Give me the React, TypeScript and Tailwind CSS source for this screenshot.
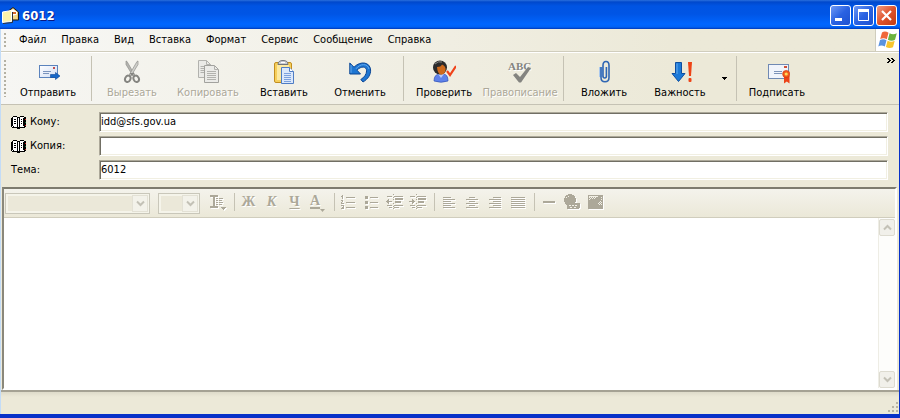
import type { ReactNode } from "react";
import { clsx } from "clsx";

const MENU = ["Файл", "Правка", "Вид", "Вставка", "Формат", "Сервис", "Сообщение", "Справка"];

function TitleIcon() {
  return (
    <svg width="17" height="17" viewBox="0 0 17 17">
      <path d="M5 5 L11 0.5 L16.5 5 V13 H5Z" fill="#e8c66c" stroke="#1a1a1a" />
      <path d="M7 5 L11 2 L15 5 V10 H7Z" fill="#fff" />
      <path d="M11 5 H14 V7 H11Z" fill="#d96a2b" />
      <path d="M10 9 L15 7.5 V12 H10Z" fill="#f3d98a" />
      <path d="M0.5 5 L9.5 3.5 V14.5 L0.5 15.5Z" fill="#fbf3ab" stroke="#fff" />
      <path d="M1 16.5 L10.5 15.5 V5" fill="none" stroke="#333" />
    </svg>
  );
}

function WindowsFlag() {
  return (
    <svg width="20" height="18" viewBox="0 0 20 18">
      <path d="M4 1.5 Q7 -0.5 10.5 1.8 L8.8 8.2 Q5.5 6.2 2.2 8Z" fill="#f0683a" />
      <path d="M11.6 2.2 Q15 4.2 18.8 2.2 L17 8.8 Q13.5 10.6 9.9 8.7Z" fill="#6cb33f" />
      <path d="M2 9 Q5.3 7.3 8.5 9.2 L6.8 15.6 Q3.5 13.6 0.3 15.4Z" fill="#5a93e0" />
      <path d="M9.6 9.7 Q13 11.6 16.7 9.7 L15 16.3 Q11.5 18 7.9 16.1Z" fill="#f7c52e" />
    </svg>
  );
}

function SendIcon() {
  return (
    <svg width="26" height="24" viewBox="0 0 26 24">
      <defs>
        <linearGradient id="env" x1="0" y1="0" x2="1" y2="1">
          <stop offset="0" stopColor="#fff" />
          <stop offset="1" stopColor="#cfdcf3" />
        </linearGradient>
      </defs>
      <rect x="4.5" y="5.5" width="18" height="12" fill="url(#env)" stroke="#5b83bd" />
      <path d="M8 11.5H16M8 13.5H14" stroke="#7a94bd" />
      <rect x="18" y="7" width="2" height="2" fill="#c0504d" />
      <path d="M15.5 14.5H20.5V12.5L25 16L20.5 19.5V17.5H15.5Z" fill="#1567c8" stroke="#0c479a" strokeWidth="0.6" />
    </svg>
  );
}

function CutIcon() {
  return (
    <svg width="24" height="24" viewBox="0 0 24 24">
      <path d="M6 1L7 1.5L14.8 15L13 16L6 4.5Z" fill="#b4b4b0" stroke="#8f8f8b" strokeWidth="0.7" />
      <path d="M18 1L17 1.5L9.2 15L11 16L18 4.5Z" fill="#d0d0cc" stroke="#8f8f8b" strokeWidth="0.7" />
      <ellipse cx="7.8" cy="18.8" rx="2.6" ry="3.3" fill="none" stroke="#858581" strokeWidth="2" transform="rotate(25 7.8 18.8)" />
      <ellipse cx="16.2" cy="18.8" rx="2.6" ry="3.3" fill="none" stroke="#858581" strokeWidth="2" transform="rotate(-25 16.2 18.8)" />
      <path d="M9.5 13L14.5 13L12 16Z" fill="#858581" />
    </svg>
  );
}

function CopyIcon() {
  return (
    <svg width="24" height="24" viewBox="0 0 24 24">
      <path d="M2.5 0.5H10.5L14.5 4.5V17.5H2.5Z" fill="#eaeae7" stroke="#b2b2ae" />
      <path d="M10.5 0.5V4.5H14.5M4.5 6.5H8M4.5 8.5H8M4.5 10.5H8M4.5 12.5H8" fill="none" stroke="#b2b2ae" />
      <path d="M8.5 5.5H18.5L22.5 9.5V22.5H8.5Z" fill="#ebebe8" stroke="#a2a29e" />
      <path d="M18.5 5.5V9.5H22.5M11 11.5H20M11 13.5H20M11 15.5H20M11 17.5H20M11 19.5H20" fill="none" stroke="#b2b2ae" />
    </svg>
  );
}

function PasteIcon() {
  return (
    <svg width="24" height="24" viewBox="0 0 24 24">
      <rect x="2.5" y="2.5" width="17" height="20" rx="1.5" fill="#f6cf5c" stroke="#c28e1f" />
      <path d="M5 5H17V20H5Z" fill="#fce9a0" />
      <path d="M6 4.5Q6 0.5 11 0.5Q16 0.5 16 4.5Z" fill="#c9ccd2" stroke="#6f737a" />
      <path d="M9 2.5H13" stroke="#fff" />
      <path d="M9.5 7.5H17.5L21.5 11.5V23.5H9.5Z" fill="#dbe8fb" stroke="#4f7dc4" />
      <path d="M17.5 7.5V11.5H21.5" fill="#fff" stroke="#4f7dc4" />
      <path d="M12 13.5H19M12 15.5H19M12 17.5H19M12 19.5H19M12 21.5H19" stroke="#7ba1de" />
    </svg>
  );
}

function UndoIcon() {
  return (
    <svg width="24" height="24" viewBox="0 0 24 24">
      <path d="M1.8 3V14H12.5L9 10.2C13 5.8 18.6 6.2 18.6 10.8C18.6 14.5 16 17.5 12.8 19.5L15 22C20 19 22.8 14.8 22.6 10C22.2 2 12.5 0.5 6 7.2Z" fill="#1e76d2" stroke="#0b4695" strokeLinejoin="round" />
      <path d="M3 5V12.8M8 8.8C12 3.5 19.5 3 21 9" fill="none" stroke="#62a9ee" />
    </svg>
  );
}

function CheckNamesIcon() {
  return (
    <svg width="24" height="24" viewBox="0 0 24 24">
      <path d="M2 21Q2 14 8 14H11Q16 14 16 21Q9 23.5 2 21Z" fill="#5f82ea" stroke="#3152b5" strokeWidth="0.7" />
      <path d="M6 14L9 18L12 14Z" fill="#b9c9fa" />
      <circle cx="8" cy="7.5" r="7" fill="#2b2b2b" />
      <path d="M5 7Q9 7 10 4.5Q14 6 13.6 10Q12.5 15 9 14.6Q5.4 14 5 7Z" fill="#cf6a1c" />
      <path d="M3 4Q6 0.8 10 2" fill="none" stroke="#888" />
      <path d="M15 11L18 15L24 6" fill="none" stroke="#f0431a" strokeWidth="2.2" />
    </svg>
  );
}

function SpellingIcon() {
  return (
    <svg width="28" height="24" viewBox="0 0 28 24">
      <text x="2" y="10" className="font-['Liberation_Serif',serif] text-[11px] font-bold" fill="#848480">
        ABC
      </text>
      <path d="M7 15L10 13L14 17L22 7L25 8L15 22.5H13Z" fill="#848480" />
    </svg>
  );
}

function AttachIcon() {
  return (
    <svg width="24" height="24" viewBox="0 0 24 24">
      <path d="M9 7V17" stroke="#a9c8ee" strokeWidth="4" />
      <path d="M9 7V17.5Q9 21.8 13 21.8Q17 21.8 17 17.5V5.5Q17 1.5 14 1.5Q11 1.5 11 5.5V16Q11 18 12.8 18Q14.4 18 14.4 16V7" fill="none" stroke="#2f66b3" strokeWidth="1.6" />
    </svg>
  );
}

function PriorityIcon() {
  return (
    <svg width="24" height="24" viewBox="0 0 24 24">
      <path d="M7.5 2.5H13.5V13.5H17L10.5 21.5L4 13.5H7.5Z" fill="#1b79d8" stroke="#0d4ea0" />
      <path d="M9 3.5V14" stroke="#64abee" />
      <path d="M20 2H24L23 16H21Z" fill="#ee4416" />
      <rect x="20.5" y="18" width="3" height="4" rx="1" fill="#ee4416" />
    </svg>
  );
}

function SignIcon() {
  return (
    <svg width="26" height="24" viewBox="0 0 26 24">
      <rect x="4.5" y="4.5" width="20" height="14" fill="#f1f4fb" stroke="#7089b3" />
      <path d="M10 11.5H18M10 13.5H18" stroke="#7d93b8" />
      <rect x="20" y="6" width="3" height="2" fill="#d0503a" />
      <path d="M20 16H25.5V23.5L22.8 21.5L20 23.5Z" fill="#ec4318" />
      <circle cx="22.2" cy="14" r="3.6" fill="#f35a1c" stroke="#cc3209" strokeWidth="0.6" />
      <circle cx="22.2" cy="14" r="1.6" fill="#ffd85a" />
    </svg>
  );
}

function BookIcon() {
  return (
    <svg width="16" height="14" viewBox="0 0 16 14" shapeRendering="crispEdges">
      <path d="M1 2H2V1H6V2H9V1H13V2H15V12H14V13H9V14H6V13H1V12H0V3H1Z" fill="#000" />
      <path d="M2 2H6V3H2ZM9 2H13V3H9ZM2 3H6V11H2ZM9 3H12V11H9Z" fill="#fff" />
      <path d="M7 3H8V12H7ZM1 11H2V12H1ZM3 11H6V12H3ZM9 11H13V12H9Z" fill="#fff" />
      <path d="M3 4H5V5H3ZM3 6H5V7H3ZM3 8H5V9H3ZM10 4H11V5H10ZM10 6H11V7H10ZM10 8H11V9H10Z" fill="#000" />
      <path d="M14 4H15V5H14Z" fill="#d22" />
      <path d="M14 7H15V8H14Z" fill="#197a3a" />
      <path d="M14 10H15V11H14Z" fill="#d22" />
    </svg>
  );
}

function ToolButton({ icon, label, disabled }: { icon: ReactNode; label: string; disabled?: boolean }) {
  return (
    <button
      type="button"
      disabled={disabled}
      className={clsx(
        "flex w-[76px] shrink-0 flex-col items-center gap-px whitespace-nowrap pt-[3px]",
        disabled && "text-[#aca899] [text-shadow:1px_1px_0_#fff]",
      )}
    >
      {icon}
      <span className="leading-4">{label}</span>
    </button>
  );
}

function Separator() {
  return <div className="ml-[5px] mr-0.5 w-px shrink-0 self-stretch bg-[#c5c2b4]" />;
}

function Grip() {
  return <div className="my-1 w-[2px] shrink-0 self-stretch bg-[repeating-linear-gradient(#b4b1a3_0_2px,transparent_2px_4px)]" />;
}

function Field({ id, label, value, book }: { id: string; label: string; value: string; book?: boolean }) {
  return (
    <div className="flex h-5 items-center">
      <label htmlFor={id} className="flex w-[88px] shrink-0 items-center gap-[3px]">
        {book && <BookIcon />}
        {label}
      </label>
      <input
        id={id}
        type="text"
        defaultValue={value}
        className="h-5 min-w-0 flex-1 border border-b-white border-l-[#aca899] border-r-white border-t-[#aca899] bg-white px-px pb-px text-[11px] leading-4 shadow-[inset_1px_1px_0_#716f64,inset_-1px_-1px_0_#f1efe2] outline-none"
      />
    </div>
  );
}

function Chevron({ up }: { up?: boolean }) {
  return (
    <svg width="9" height="7" viewBox="0 0 9 7" className={clsx(up && "rotate-180")}>
      <path d="M1 1.5L4.5 5L8 1.5" fill="none" stroke="#c3c1b6" strokeWidth="2" />
    </svg>
  );
}

function FormatSelect({ label, wide }: { label: string; wide?: boolean }) {
  return (
    <div className={clsx("relative h-[21px] shrink-0", wide ? "w-[145px]" : "w-[42px]")}>
      <select
        aria-label={label}
        disabled
        className="h-full w-full appearance-none border border-[#c9c7ba] bg-[#ebe8d9] shadow-[inset_0_0_0_2px_#f5f4ea]"
      />
      <span className="pointer-events-none absolute inset-y-0.5 right-0.5 flex w-4 items-center justify-center border border-[#e3e1d5] bg-[#f3f2ea]">
        <Chevron />
      </span>
    </div>
  );
}

function FormatButton({ label, children }: { label: string; children: ReactNode }) {
  return (
    <button
      type="button"
      disabled
      aria-label={label}
      className="flex h-6 w-[23px] shrink-0 items-center justify-center font-['Liberation_Serif',serif] text-[14px] font-bold leading-4 text-[#aca899] [text-shadow:1px_1px_0_#fff]"
    >
      {children}
    </button>
  );
}

// 17x16 one-colour toolbar glyph
function Glyph({ d, children }: { d?: string; children?: ReactNode }) {
  return (
    <svg
      width="17"
      height="16"
      viewBox="0 0 17 16"
      fill="#aca899"
      shapeRendering="crispEdges"
      className="shrink-0 drop-shadow-[1px_1px_0_#fff]"
    >
      {d && <path d={d} />}
      {children}
    </svg>
  );
}

const STYLE = "M1 1h8v2h-8zM4 3h2v9h-2zM1 12h8v2h-8zM7 4h2v1h-2zM10 4h4v1h-4zM7 6h2v1h-2zM10 6h3v1h-3zM7 8h2v1h-2zM10 8h4v1h-4zM7 10h2v1h-2zM10 10h3v1h-3zM12 13h5v1h-5zM13 14h3v1h-3zM14 15h1v1h-1z";
const NUMBERED = "M2 1h1v4h-1zM1 2h1v1h-1zM1 6h2v1h-2zM2 7h1v1h-1zM1 8h1v1h-1zM1 9h3v1h-3zM1 11h3v1h-3zM2 13h2v1h-2zM3 12h1v3h-1zM1 14h2v1h-2zM6 3h9v1h-9zM6 8h9v1h-9zM6 13h9v1h-9z";
const BULLETS = "M2 2h3v3h-3zM2 7h3v3h-3zM2 12h3v3h-3zM7 3h8v1h-8zM7 8h8v1h-8zM7 13h8v1h-8z";
const INDENT = "M1 2h5v1h-5zM8 2h9v1h-9zM9 4h8v2h-8zM9 7h6v2h-6zM1 11h5v1h-5zM8 11h9v1h-9zM3 13h3v1h-3zM8 13h5v1h-5zM7 0h1v1h-1zM7 3h1v1h-1zM7 5h1v1h-1zM7 9h1v1h-1zM7 12h1v1h-1zM7 14h1v1h-1z";
const OUTDENT_ARROW = "M0 7h6v1h-6zM1 6h2v3h-2zM2 5h1v5h-1z";
const INDENT_ARROW = "M0 7h6v1h-6zM3 6h2v3h-2zM3 5h1v5h-1z";
const LEFT = "M3 3h8v1h-8zM3 5h12v1h-12zM3 7h8v1h-8zM3 9h12v1h-12zM3 11h8v1h-8zM3 13h12v1h-12z";
const CENTER = "M6 3h6v1h-6zM3 5h12v1h-12zM6 7h6v1h-6zM3 9h12v1h-12zM6 11h6v1h-6zM3 13h12v1h-12z";
const RIGHT = "M7 3h8v1h-8zM3 5h12v1h-12zM7 7h8v1h-8zM3 9h12v1h-12zM7 11h8v1h-8zM3 13h12v1h-12z";
const JUSTIFY = "M2 3h14v1h-14zM2 5h14v1h-14zM2 7h14v1h-14zM2 9h14v1h-14zM2 11h14v1h-14zM2 13h14v1h-14z";

function CaptionButton({ label, close, children }: { label: string; close?: boolean; children: ReactNode }) {
  return (
    <button
      type="button"
      aria-label={label}
      className={clsx(
        "flex h-[21px] w-[21px] items-center justify-center rounded-[3px] border border-white",
        close
          ? "bg-linear-to-br from-[#ee9a80] via-[#e0532b] to-[#c23b12]"
          : "bg-linear-to-br from-[#6e98f5] via-[#2a62e2] to-[#1d51d0]",
      )}
    >
      <svg width="15" height="15" viewBox="0 0 15 15">
        {children}
      </svg>
    </button>
  );
}

export default function App() {
  return (
    <div className="flex min-h-screen flex-col border-b-4 border-r border-[#0831c8] bg-[#ece9d8] font-['DejaVu_Sans_Condensed','DejaVu_Sans',sans-serif] text-[11px] text-black">
      <header className="-mr-px flex h-[29px] shrink-0 items-center bg-[linear-gradient(#2a6fdd_0,#0048cc_2px,#0054e3_6px,#0055e5_14px,#0066ff_24px,#0062f5_27px,#0038b8_29px)] pl-0.5 pr-[3px] pt-0.5">
        <TitleIcon />
        <h1 className="ml-[3px] flex-1 text-[13px] font-bold text-white [text-shadow:1px_1px_0_#0a1883]">6012</h1>
        <div className="flex gap-0.5">
          <CaptionButton label="Свернуть">
            <rect x="2" y="10" width="7" height="3" fill="#fff" />
          </CaptionButton>
          <CaptionButton label="Развернуть">
            <path d="M2.5 2H12.5V12.5H2.5Z" fill="none" stroke="#fff" />
            <path d="M2 2.5H13" stroke="#fff" strokeWidth="3" />
          </CaptionButton>
          <CaptionButton label="Закрыть" close>
            <path d="M3 3L12 12M12 3L3 12" stroke="#fff" strokeWidth="2.2" />
          </CaptionButton>
        </div>
      </header>

      <div className="flex flex-1 flex-col border-l border-[#c3dcf7]">
        <nav className="flex h-[23px] shrink-0 items-center border-b border-[#d0cdbd] bg-linear-to-r from-[#f8f8f6] to-[#ece9d8] to-75% pl-[3px]">
          <Grip />
          <div className="ml-[5px] flex flex-1">
            {MENU.map((item) => (
              <button key={item} type="button" className="pl-2 pr-[7px] leading-4">
                {item}
              </button>
            ))}
          </div>
          <div className="flex h-full w-6 items-center justify-center border-l border-[#d0cdbd] bg-white">
            <WindowsFlag />
          </div>
        </nav>

        <div className="flex h-[53px] shrink-0 items-center border-b border-[#c5c2b4] border-t border-t-white bg-[linear-gradient(to_right,#f6f6f3,#ece9d8_75%)] py-[3px] pl-[3px]">
          <Grip />
          <div className="ml-1 flex flex-1 items-center self-stretch">
            <ToolButton icon={<SendIcon />} label="Отправить" />
            <Separator />
            <ToolButton icon={<CutIcon />} label="Вырезать" disabled />
            <ToolButton icon={<CopyIcon />} label="Копировать" disabled />
            <ToolButton icon={<PasteIcon />} label="Вставить" />
            <ToolButton icon={<UndoIcon />} label="Отменить" />
            <Separator />
            <ToolButton icon={<CheckNamesIcon />} label="Проверить" />
            <ToolButton icon={<SpellingIcon />} label="Правописание" disabled />
            <Separator />
            <ToolButton icon={<AttachIcon />} label="Вложить" />
            <ToolButton icon={<PriorityIcon />} label="Важность" />
            <button type="button" aria-label="Выбрать важность" className="flex w-[13px] justify-center">
              <svg width="5" height="3" viewBox="0 0 5 3" shapeRendering="crispEdges">
                <path d="M0 0H5V1H4V2H3V3H2V2H1V1H0Z" />
              </svg>
            </button>
            <Separator />
            <ToolButton icon={<SignIcon />} label="Подписать" />
          </div>
          <button type="button" aria-label="Ещё" className="mr-1 mt-0.5 self-start">
            <svg width="8" height="5" viewBox="0 0 8 5" shapeRendering="crispEdges">
              <path d="M0 0h2v1h-2zM1 1h2v1h-2zM2 2h2v1h-2zM1 3h2v1h-2zM0 4h2v1h-2zM4 0h2v1h-2zM5 1h2v1h-2zM6 2h2v1h-2zM5 3h2v1h-2zM4 4h2v1h-2z" />
            </svg>
          </button>
        </div>

        <form className="flex shrink-0 flex-col gap-1 pb-[7px] pl-2.5 pr-[11px] pt-[7px]">
          <Field id="to" label="Кому:" value="idd@sfs.gov.ua" book />
          <Field id="cc" label="Копия:" value="" book />
          <Field id="subject" label="Тема:" value="6012" />
        </form>

        <main className="ml-px mr-0.5 flex flex-1 flex-col border-2 border-b-white border-l-[#8a887b] border-r-white border-t-[#7d7b6e]">
          <div className="flex h-[29px] shrink-0 items-center border-b border-[#d0cdbd] bg-[linear-gradient(#f4f3ec,#ebe8d8)] pl-px">
            <FormatSelect label="Шрифт" wide />
            <div className="ml-2 flex">
              <FormatSelect label="Размер" />
            </div>
            <div className="mb-0.5 ml-1.5 flex h-[18px] items-center">
              <FormatButton label="Стиль абзаца">
                <Glyph d={STYLE} />
              </FormatButton>
              <Separator />
              <FormatButton label="Полужирный">Ж</FormatButton>
              <FormatButton label="Курсив">
                <span className="italic">К</span>
              </FormatButton>
              <FormatButton label="Подчёркнутый">
                <span className="underline underline-offset-2">Ч</span>
              </FormatButton>
              <FormatButton label="Цвет текста">
                <span className="border-b-2 border-[#aca899] leading-3">А</span>
                <svg width="5" height="3" viewBox="0 0 5 3" className="mb-0.5 self-end" fill="#aca899">
                  <path d="M0 0H5L2.5 3Z" />
                </svg>
              </FormatButton>
              <Separator />
              <FormatButton label="Нумерация">
                <Glyph d={NUMBERED} />
              </FormatButton>
              <FormatButton label="Маркеры">
                <Glyph d={BULLETS} />
              </FormatButton>
              <FormatButton label="Уменьшить отступ">
                <Glyph d={INDENT + OUTDENT_ARROW} />
              </FormatButton>
              <FormatButton label="Увеличить отступ">
                <Glyph d={INDENT + INDENT_ARROW} />
              </FormatButton>
              <Separator />
              <FormatButton label="По левому краю">
                <Glyph d={LEFT} />
              </FormatButton>
              <FormatButton label="По центру">
                <Glyph d={CENTER} />
              </FormatButton>
              <FormatButton label="По правому краю">
                <Glyph d={RIGHT} />
              </FormatButton>
              <FormatButton label="По ширине">
                <Glyph d={JUSTIFY} />
              </FormatButton>
              <Separator />
              <FormatButton label="Линия">
                <Glyph d="M3 7h12v2h-12z" />
              </FormatButton>
              <FormatButton label="Ссылка">
                <Glyph>
                  <circle cx="7" cy="6" r="6" />
                  <rect x="4" y="9" width="7" height="6" rx="2" />
                  <rect x="9" y="9" width="8" height="6" rx="2" />
                  <path d="M6 11h2v1h-2zM9 11h2v1h-2zM12 11h2v1h-2zM7 13h2v1h-2zM11 13h2v1h-2zM3 3h1v1h-1zM5 2h1v1h-1z" fill="#f2f0e6" />
                </Glyph>
              </FormatButton>
              <FormatButton label="Рисунок">
                <Glyph>
                  <path d="M2 1h15v14h-15z" />
                  <path d="M3 2h9v1h-9zM3 3h1v1h-1zM5 3h1v1h-1zM7 3h1v1h-1zM9 3h1v1h-1zM4 4h1v1h-1zM6 4h1v1h-1zM8 4h1v1h-1zM3 5h1v1h-1zM15 3h1v1h-1zM15 5h1v1h-1zM14 7h1v1h-1zM13 8h1v1h-1zM15 8h1v1h-1zM12 9h1v1h-1zM14 9h1v1h-1zM13 10h1v1h-1zM15 10h1v1h-1z" fill="#f2f0e6" />
                </Glyph>
              </FormatButton>
            </div>
          </div>
          <div className="flex flex-1 bg-white">
            <textarea aria-label="Текст сообщения" className="min-w-0 flex-1 resize-none p-1 outline-none" />
            <div className="flex w-[17px] shrink-0 flex-col justify-between border-l border-[#eeede5] bg-[#fdfdfb] pt-px">
              <button type="button" aria-label="Вверх" className="flex h-[17px] items-center justify-center rounded-xs border border-[#dddbd0] bg-[#f1f0ea]">
                <Chevron up />
              </button>
              <button type="button" aria-label="Вниз" className="flex h-[17px] items-center justify-center rounded-xs border border-[#dddbd0] bg-[#f1f0ea]">
                <Chevron />
              </button>
            </div>
          </div>
        </main>

        <footer className="flex h-6 shrink-0 items-end justify-end border-t-2 border-[#a5a294] bg-[linear-gradient(#dedbca,#ece9d8_5px)] pb-px">
          <svg width="11" height="11" viewBox="0 0 11 11" fill="#b8b4a2" shapeRendering="crispEdges">
            <path d="M8 0h2v2h-2zM4 4h2v2h-2zM8 4h2v2h-2zM0 8h2v2h-2zM4 8h2v2h-2zM8 8h2v2h-2z" />
          </svg>
        </footer>
      </div>
    </div>
  );
}
